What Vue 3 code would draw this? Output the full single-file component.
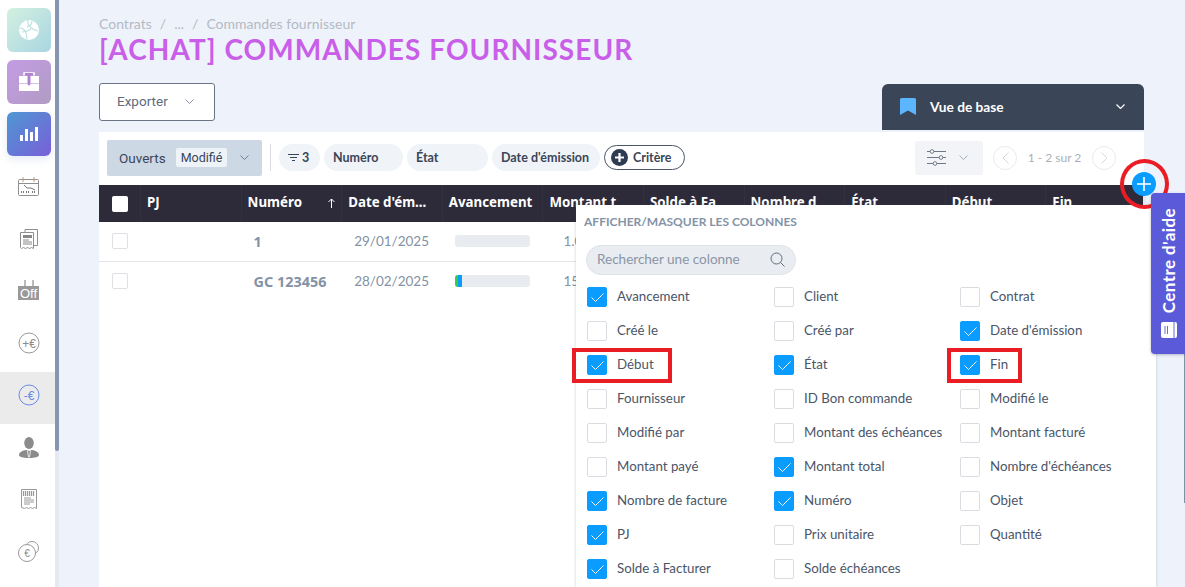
<template>
  <div class="page">
    <aside class="sidebar">
      <div class="tile tile-green">
        <svg width="20" height="20" viewBox="0 0 20 20"><circle cx="10" cy="10" r="10" fill="#fff" /><path d="M1 8c4 0 7 4 7 11M9 0c-1 5 3 9 10 11M12 9c-3 2-5 3-9 3M13 1c0 3-2 5-5 6" stroke="#bde3dc" stroke-width="1.200" fill="none" /></svg>
      </div>
      <div class="tile tile-purple">
        <svg width="20" height="20" viewBox="0 0 20 20"><path d="M5 3.500V1h10v2.500" stroke="#fff" stroke-width="1.500" fill="none" /><path d="M0 4h20v15H0z" fill="#fff" /><path d="M0 11.500h20" stroke="#b99ad6" stroke-width=".6" /><path d="M6 1h8v2.500h-2.500V12L10 14l-1.500-2V3.500H6z" fill="#b184cf" /></svg>
      </div>
      <div class="tile tile-blue">
        <svg width="18" height="14" viewBox="0 0 18 14" fill="#fff"><rect y="8" width="3" height="6" /><rect x="5" y="2" width="3" height="12" /><rect x="10" y="5" width="3" height="9" /><rect x="15" width="3" height="14" /></svg>
      </div>

      <div v-for="(item, i) in navItems" :key="i" class="nav-item" :class="{ active: item === 'minus' }">
        <svg v-if="item === 'calendar'" width="22" height="20" viewBox="0 0 22 20" fill="none" stroke="#8f8f8f"><rect x=".5" y="2.500" width="20" height="16" rx="1" /><path d="M5 0v5M16 0v5" stroke="#c99a6b" /><path d="M.5 6.500h20" /><path d="M6 8l3 3h4l4 2" stroke="#777" /><path d="M3 15h3M8 15h3M14 15h3" stroke="#777" stroke-width="2" stroke-dasharray="1 1" /></svg>
        <svg v-else-if="item === 'receipts'" width="18" height="21" viewBox="0 0 18 21" fill="none" stroke="#8f8f8f"><path d="M5 3V.5h12.500v16H14" /><path d="M.5 3.500h13v16l-2-1-2 1-2-1-2 1-2-1-2 1-1-1z" fill="#fff" /><path d="M3 6h9v3H3z" fill="#888" stroke="none" /><path d="M3 11h6M3 13h9M3 15h9" stroke="#888" /></svg>
        <svg v-else-if="item === 'off'" width="22" height="22" viewBox="0 0 22 22"><path d="M7 0v8M15 0v8" stroke="#777" fill="none" /><rect y="6" width="21" height="14" fill="#999" /><text x="10.500" y="18" text-anchor="middle" font-size="13" font-family="Liberation Sans, sans-serif" fill="#fff">Off</text></svg>
        <svg v-else-if="item === 'plus'" width="22" height="22" viewBox="0 0 22 22"><circle cx="11" cy="11" r="10" fill="none" stroke="#999" /><text x="11" y="15.500" text-anchor="middle" font-size="12" font-family="Liberation Sans, sans-serif" fill="#8a8a8a">+€</text></svg>
        <svg v-else-if="item === 'minus'" width="22" height="22" viewBox="0 0 22 22"><circle cx="11" cy="11" r="10" fill="none" stroke="#6a8be6" /><text x="11" y="15.500" text-anchor="middle" font-size="12" font-family="Liberation Sans, sans-serif" fill="#6a8be6">-€</text></svg>
        <svg v-else-if="item === 'person'" width="20" height="21" viewBox="0 0 20 21" fill="#8b8b8b"><ellipse cx="10" cy="6" rx="4.800" ry="6" /><path d="M0 18c0-3 4-4.500 7-5l3 1 3-1c3 .5 7 2 7 5 0 2-4 3-10 3S0 20 0 18z" /><path d="M8.500 14l1 6h1l1-6" fill="none" stroke="#fff" stroke-width=".8" /></svg>
        <svg v-else-if="item === 'receipt'" width="16" height="21" viewBox="0 0 16 21" fill="none" stroke="#999"><path d="M.5.500h15v19l-2-1-2 1-2-1-2 1-2-1-2 1-3-1z" /><path d="M2.500 2v5M4.500 2v5M6.500 2v5M8.500 2v5M10.500 2v5M12.500 2v5" stroke-width="1.200" /><path d="M3 9h7M3 11h10M3 13h10M3 15h6" /></svg>
        <svg v-else width="22" height="21" viewBox="0 0 22 21" fill="none" stroke="#999"><circle cx="14" cy="7" r="6.500" /><circle cx="9" cy="12" r="8.500" fill="#fff" /><text x="9" y="16" text-anchor="middle" font-size="10" font-family="Liberation Sans, sans-serif" fill="#888" stroke="none">€</text></svg>
      </div>
    </aside>
    <div class="scroll-track"><div class="scroll-thumb"></div></div>

    <main class="main">
      <div class="crumbs"><span>Contrats</span><span>/</span><span>...</span><span>/</span><span>Commandes fournisseur</span></div>
      <h1 class="title">[ACHAT] COMMANDES FOURNISSEUR</h1>

      <div class="actions">
        <button class="export-btn">
          Exporter
          <svg width="9" height="5" viewBox="0 0 9 5" fill="none" stroke="#8a94a6"><path d="M.5.500l4 4 4-4" /></svg>
        </button>
        <div class="view-tab">
          <svg width="16" height="17" viewBox="0 0 16 17"><path d="M0 1.500Q0 0 1.500 0h13Q16 0 16 1.500V17l-8-4.500L0 17z" fill="#5cb6ff" /></svg>
          <span>Vue de base</span>
          <svg class="view-caret" width="9" height="5" viewBox="0 0 9 5" fill="none" stroke="#fff" stroke-width="1.200"><path d="M.5.500l4 4 4-4" /></svg>
        </div>
      </div>

      <section class="card">
        <div class="toolbar">
          <div class="status">
            <span>Ouverts</span>
            <span class="status-tag">Modifié</span>
            <svg width="9" height="5" viewBox="0 0 9 5" fill="none" stroke="#6f7d92"><path d="M.5.500l4 4 4-4" /></svg>
          </div>
          <div class="divider"></div>
          <div class="chip chip-count">
            <svg width="11" height="7" viewBox="0 0 11 7" stroke="#3a4558"><path d="M0 .5h11M2 3.500h7M4 6.500h3" /></svg>3
          </div>
          <div v-for="chip in chips" :key="chip.label" class="chip" :style="{ width: chip.width + 'px' }">{{ chip.label }}</div>
          <div class="criteria">
            <svg width="17" height="17" viewBox="0 0 17 17"><circle cx="8.500" cy="8.500" r="8.500" fill="#2f3b50" /><path d="M8.500 4v9M4 8.500h9" stroke="#fff" stroke-width="2.200" /></svg>
            Critère
          </div>
          <div class="tools">
            <div class="settings">
              <svg width="19" height="17" viewBox="0 0 19 17" fill="none" stroke="#6f7786"><path d="M0 2.500h19M0 8.500h19M0 14.500h19" /><circle cx="5" cy="2.500" r="1.800" fill="#fff" /><circle cx="14" cy="8.500" r="1.800" fill="#fff" /><circle cx="8" cy="14.500" r="1.800" fill="#fff" /></svg>
              <svg width="9" height="5" viewBox="0 0 9 5" fill="none" stroke="#a5aebc"><path d="M.5.500l4 4 4-4" /></svg>
            </div>
            <div class="pager">
              <span class="page-btn"><svg width="7" height="12" viewBox="0 0 7 12" fill="none" stroke="#d5dae2"><path d="M6.500.500L1 6l5.500 5.500" /></svg></span>
              <span class="page-label">1 - 2 sur 2</span>
              <span class="page-btn"><svg width="7" height="12" viewBox="0 0 7 12" fill="none" stroke="#d5dae2"><path d="M.5.500L6 6 .5 11.500" /></svg></span>
            </div>
          </div>
        </div>

        <div class="table-head">
          <div class="cell-check"><span class="head-box"></span></div>
          <div v-for="col in columns" :key="col" class="head-cell">
            {{ col }}
            <svg v-if="col === 'Numéro'" class="sort" width="7" height="10" viewBox="0 0 7 10" fill="none" stroke="#fff"><path d="M3.500 10V1M.5 4l3-3 3 3" /></svg>
          </div>
        </div>
        <div v-for="row in rows" :key="row.num" class="table-row">
          <div class="cell-check"><span class="row-box"></span></div>
          <div class="cell"></div>
          <div class="cell cell-num">{{ row.num }}</div>
          <div class="cell cell-date">{{ row.date }}</div>
          <div class="cell cell-bar">
            <div class="bar">
              <span v-if="row.progress" class="bar-green"></span>
              <span v-if="row.progress" class="bar-blue"></span>
            </div>
          </div>
          <div class="cell cell-amount">{{ row.amount }}</div>
        </div>
      </section>
    </main>

    <div class="popover">
      <div class="pop-title">AFFICHER/MASQUER LES COLONNES</div>
      <div class="search">
        <span>Rechercher une colonne</span>
        <svg width="15" height="15" viewBox="0 0 15 15" fill="none" stroke="#5e6b7e"><circle cx="6.500" cy="6.500" r="5.500" /><path d="M10.500 10.500L14.500 14.500" /></svg>
      </div>
      <div class="col-grid">
        <label v-for="opt in options" :key="opt.label" class="col-opt">
          <span class="box" :class="{ on: opt.on }">
            <svg v-if="opt.on" width="13" height="9" viewBox="0 0 13 9" fill="none" stroke="#fff"><path d="M.5 4.500L4.500 8.500 12.500.500" /></svg>
          </span>
          {{ opt.label }}
        </label>
      </div>
    </div>

    <div class="add-col">
      <svg width="24" height="24" viewBox="0 0 24 24"><circle cx="12" cy="12" r="12" fill="#0a9dff" /><path d="M12 5v14M5 12h14" stroke="#fff" stroke-width="1.600" /></svg>
    </div>
    <div class="mark-ring"></div>
    <div class="mark-rect mark-debut"></div>
    <div class="mark-rect mark-fin"></div>

    <div class="page-scroll"></div>
    <div class="help-tab">
      <span>Centre d'aide</span>
      <svg width="16" height="16" viewBox="0 0 16 16"><rect width="16" height="16" rx="2" fill="#fff" /><path d="M4 4v8M6.500 4v8M13 0v16" stroke="#5b5bd9" stroke-width=".9" /></svg>
    </div>
  </div>
</template>

<script setup>
const navItems = ['calendar', 'receipts', 'off', 'plus', 'minus', 'person', 'receipt', 'coins']

const chips = [
  { label: 'Numéro', width: 79 },
  { label: 'État', width: 81 },
  { label: "Date d'émission", width: 108 }
]

const columns = ['PJ', 'Numéro', "Date d'ém...", 'Avancement', 'Montant t', 'Solde à Fa', 'Nombre d', 'État', 'Début', 'Fin']

const rows = [
  { num: '1', date: '29/01/2025', progress: false, amount: '1.000,00' },
  { num: 'GC 123456', date: '28/02/2025', progress: true, amount: '150,00' }
]

const checked = ['Avancement', "Date d'émission", 'Début', 'État', 'Fin', 'Montant total', 'Nombre de facture', 'Numéro', 'PJ', 'Solde à Facturer']
const labels = [
  'Avancement', 'Client', 'Contrat',
  'Créé le', 'Créé par', "Date d'émission",
  'Début', 'État', 'Fin',
  'Fournisseur', 'ID Bon commande', 'Modifié le',
  'Modifié par', 'Montant des échéances', 'Montant facturé',
  'Montant payé', 'Montant total', "Nombre d'échéances",
  'Nombre de facture', 'Numéro', 'Objet',
  'PJ', 'Prix unitaire', 'Quantité',
  'Solde à Facturer', 'Solde échéances'
]
const options = labels.map((label) => ({ label, on: checked.includes(label) }))
</script>

<style scoped>
.page {
  position: relative;
  display: flex;
  width: 1185px;
  height: 587px;
  overflow: hidden;
  background: #eef3fb;
  font-family: "Lato", "Liberation Sans", sans-serif;
  color: #3a4558;
}

.sidebar {
  flex: 0 0 55px;
  display: flex;
  flex-direction: column;
  align-items: stretch;
  padding-top: 8px;
  background: #fff;
}

.tile {
  width: 44px;
  height: 44px;
  margin: 0 0 8px 7px;
  border-radius: 6px;
  display: flex;
  align-items: center;
  justify-content: center;
}

.tile-green { background: linear-gradient(135deg, #d2f0e0, #a9d6e2); }
.tile-purple { background: linear-gradient(135deg, #c39be3, #b19cc4); }
.tile-blue { background: linear-gradient(135deg, #4d97d2, #7a5fd8); box-shadow: 0 3px 8px rgba(90, 110, 200, 0.15); }

.nav-item {
  flex: 0 0 52px;
  display: flex;
  align-items: center;
  justify-content: center;
  padding: 0 0 6px 3px;
  box-sizing: border-box;
}

.nav-item.active { background: #ebebeb; }

.scroll-track {
  flex: 0 0 4px;
  background: #e4e9f3;
}

.scroll-thumb {
  height: 451px;
  background: #8796b0;
  border-radius: 0 0 2px 2px;
}

.main {
  flex: 1;
  padding: 15px 41px 0 40px;
  min-width: 0;
}

.crumbs {
  display: flex;
  gap: 8px;
  font-size: 14px;
  line-height: 18px;
  color: #b4bac3;
}

.title {
  margin: 0;
  font-size: 28px;
  line-height: 33px;
  font-weight: 700;
  letter-spacing: 1.050px;
  color: #c95fe8;
}

.actions {
  display: flex;
  justify-content: space-between;
  align-items: flex-start;
  margin-top: 17px;
  height: 49px;
}

.export-btn {
  display: flex;
  align-items: center;
  gap: 17px;
  width: 116px;
  height: 38px;
  padding: 0 0 2px 17px;
  border: 1px solid #6b7484;
  border-radius: 3px;
  background: #fff;
  color: #5f6b7d;
  font: 400 13.5px "Roboto", sans-serif;
}

.view-tab {
  display: flex;
  align-items: center;
  gap: 14px;
  width: 262px;
  height: 46px;
  margin-top: 1px;
  padding: 0 19px 2px 18px;
  box-sizing: border-box;
  border-radius: 6px 6px 0 0;
  background: #3a4558;
  color: #fff;
  font-size: 13.700px;
  font-weight: 700;
}

.view-caret { margin-left: auto; }

.card {
  height: 455px;
  background: #fff;
}

.toolbar {
  display: flex;
  align-items: center;
  height: 53px;
  padding: 0 28px 2px 8px;
  box-sizing: border-box;
}

.status {
  display: flex;
  align-items: center;
  width: 155px;
  height: 36px;
  padding-left: 12px;
  box-sizing: border-box;
  border-radius: 2px;
  background: #cdd8e5;
  font: 400 13.5px "Roboto", sans-serif;
}

.status-tag {
  margin: 0 13px 0 10px;
  padding: 2px 5px;
  border-radius: 2px;
  background: #eef3f8;
  font-size: 12.5px;
}

.divider {
  width: 1px;
  height: 27px;
  margin: 0 8px;
  background: #d9dde3;
}

.chip {
  display: flex;
  align-items: center;
  height: 27px;
  margin-right: 4px;
  padding-left: 9px;
  box-sizing: border-box;
  border-radius: 14px;
  background: #f0f3f7;
  font-size: 12.5px;
  font-weight: 700;
  white-space: nowrap;
}

.chip-count {
  gap: 3px;
  width: 41px;
}

.criteria {
  display: flex;
  align-items: center;
  gap: 5px;
  width: 81px;
  height: 25px;
  padding-left: 6px;
  box-sizing: border-box;
  border: 1px solid #4a5568;
  border-radius: 13px;
  font-size: 12.5px;
  font-weight: 700;
}

.tools {
  display: flex;
  align-items: center;
  margin-left: auto;
}

.settings {
  display: flex;
  align-items: center;
  gap: 13px;
  width: 68px;
  height: 34px;
  padding-left: 12px;
  box-sizing: border-box;
  border-radius: 3px;
  background: #f2f4f7;
}

.pager {
  display: flex;
  align-items: center;
  margin-left: 10px;
}

.page-btn {
  display: flex;
  align-items: center;
  justify-content: center;
  width: 22px;
  height: 22px;
  border: 1px solid #e8ebf0;
  border-radius: 50%;
}

.page-label {
  width: 75px;
  text-align: center;
  font-size: 12px;
  color: #a8afba;
}

.table-head {
  display: grid;
  grid-template-columns: 41px repeat(10, 100.6px) 1fr;
  align-items: center;
  height: 37px;
  background: #2d2b3a;
}

.head-cell {
  position: relative;
  height: 37px;
  padding-left: 6px;
  box-sizing: border-box;
  border-left: 1px solid #33313f;
  color: #fff;
  font: 700 13.3px/35px "Noto Sans", sans-serif;
  white-space: nowrap;
  overflow: hidden;
}

.sort {
  position: absolute;
  right: 6px;
  top: 13px;
}

.cell-check {
  padding-left: 13px;
  display: flex;
  align-items: center;
}

.head-box {
  width: 16px;
  height: 16px;
  border-radius: 2px;
  background: #fff;
}

.row-box {
  width: 14px;
  height: 14px;
  border: 1px solid #dde0e5;
  border-radius: 2px;
}

.table-row {
  display: grid;
  grid-template-columns: 41px repeat(10, 100.6px) 1fr;
  align-items: center;
  height: 38px;
  padding-bottom: 1px;
  border-bottom: 1px solid #e4e6ea;
  box-sizing: content-box;
  font-size: 13.5px;
  color: #8492a6;
}

.table-row:last-child { border-bottom: 0; }

.cell { padding-left: 14px; white-space: nowrap; }
.cell-num { padding-left: 13px; font-family: "Noto Sans", sans-serif; font-weight: 700; font-size: 14.400px; }
.cell-date { padding-left: 13px; }
.cell-amount { padding-left: 21px; }

.bar {
  display: flex;
  width: 75px;
  height: 12px;
  margin-left: -1px;
  border-radius: 3px;
  overflow: hidden;
  background: #e8ebf0;
}

.bar-green { width: 3px; background: #3cc84b; }
.bar-blue { width: 4px; background: #0a9dff; }

.popover {
  position: absolute;
  left: 576px;
  top: 205px;
  width: 580px;
  height: 382px;
  padding: 10px 8px 0;
  box-sizing: border-box;
  background: #fff;
  box-shadow: 0 0 3px rgba(60, 70, 90, 0.25);
}

.pop-title {
  font-size: 12px;
  line-height: 14px;
  font-weight: 700;
  color: #8492a6;
}

.search {
  display: flex;
  align-items: center;
  justify-content: space-between;
  width: 210px;
  height: 30px;
  margin: 16px 0 0 2px;
  padding: 0 10px 2px;
  box-sizing: border-box;
  border: 1px solid #dfe3e8;
  border-radius: 15px;
  background: #e9ecf0;
  color: #8b95a5;
  font-size: 13.500px;
}

.col-grid {
  display: grid;
  grid-template-columns: 187px 186px 1fr;
  grid-auto-rows: 34px;
  margin: 5px 0 0 3px;
}

.col-opt {
  display: flex;
  align-items: center;
  gap: 10px;
  padding-bottom: 2px;
  font-size: 13.300px;
  color: #4a5568;
  white-space: nowrap;
}

.box {
  flex: none;
  display: flex;
  align-items: center;
  justify-content: center;
  width: 20px;
  height: 20px;
  margin-bottom: -2px;
  box-sizing: border-box;
  border: 1px solid #d9dce1;
  border-radius: 2px;
}

.box.on {
  border-color: #0a9dff;
  background: #0a9dff;
}

.add-col {
  position: absolute;
  left: 1132px;
  top: 172px;
  width: 24px;
  height: 24px;
}

.add-col::after {
  content: '';
  position: absolute;
  left: 11px;
  top: 24px;
  width: 3px;
  height: 9px;
  background: #e8e8ec;
}

.mark-ring {
  position: absolute;
  left: 1120px;
  top: 159px;
  width: 49px;
  height: 50px;
  box-sizing: border-box;
  border: 4px solid #ea1c24;
  border-radius: 50%;
}

.mark-rect {
  position: absolute;
  top: 348px;
  height: 35px;
  box-sizing: border-box;
  border: 4px solid #ea1c24;
}

.mark-debut { left: 572px; width: 100px; }
.mark-fin { left: 947px; width: 75px; }

.page-scroll {
  position: absolute;
  right: 0;
  top: 250px;
  width: 1px;
  height: 253px;
  background: #7f93a8;
}

.help-tab {
  position: absolute;
  left: 1151px;
  top: 193px;
  display: flex;
  flex-direction: column;
  align-items: center;
  justify-content: space-between;
  width: 34px;
  height: 161px;
  padding: 15px 0 16px 1px;
  box-sizing: border-box;
  border-radius: 4px 0 0 4px;
  background: #5b5bd9;
  box-shadow: 0 1px 3px rgba(40, 40, 80, 0.3);
  color: #fff;
}

.help-tab span {
  writing-mode: vertical-rl;
  transform: rotate(180deg);
  font-size: 17px;
  font-weight: 700;
  letter-spacing: 0.4px;
  white-space: nowrap;
}
</style>
